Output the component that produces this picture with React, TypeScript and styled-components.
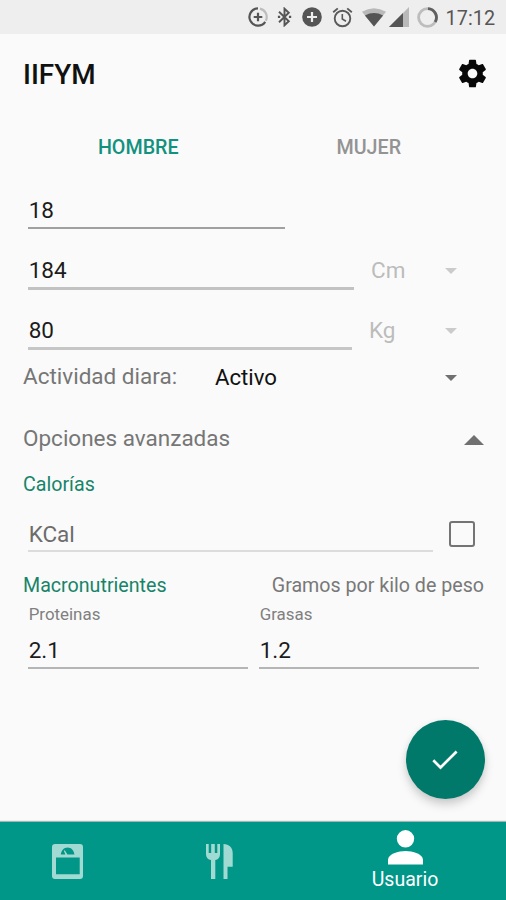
import React from "react";
import styled, { createGlobalStyle } from "styled-components";

const TEAL = "#009688";
const DARK_TEAL = "#00796b";

const GlobalStyle = createGlobalStyle`
  *, *::before, *::after { box-sizing: border-box; }
  body { margin: 0; background: #fafafa; }
`;

const Screen = styled.main`
  width: 506px;
  height: 900px;
  display: flex;
  flex-direction: column;
  overflow: hidden;
  background: #fafafa;
  color: #1c1c1c;
  font-family: Roboto, "Liberation Sans", sans-serif;
  font-size: 22.5px;
`;

const StatusBar = styled.header`
  height: 34px;
  flex: none;
  display: flex;
  align-items: center;
  justify-content: flex-end;
  padding-right: 10.5px;
  background: #eeeeee;
`;

const StatusIcon = styled.svg<{ $w: number; $h: number; $gap: number }>`
  display: block;
  flex: none;
  width: ${(p) => p.$w}px;
  height: ${(p) => p.$h}px;
  margin-right: ${(p) => p.$gap}px;
`;

const Clock = styled.time`
  width: 50px;
  line-height: 34px;
  padding-top: 3px;
  font-size: 19.8px;
  letter-spacing: 0.1px;
  color: #565656;
  white-space: nowrap;
`;

const Toolbar = styled.div`
  height: 80px;
  flex: none;
  display: flex;
  align-items: flex-start;
  justify-content: space-between;
  padding: 0 17px 0 23px;
`;

const Title = styled.h1`
  margin: 0;
  font-size: 27.9px;
  font-weight: 500;
  line-height: 82px;
  color: #111;
`;

const GearButton = styled.button`
  width: 33px;
  height: 33px;
  margin-top: 23px;
  padding: 0;
  border: 0;
  background: none;
  svg { display: block; }
`;

const Tabs = styled.div`
  height: 67px;
  flex: none;
  display: grid;
  grid-template-columns: 1fr 1fr;
  padding: 0 22px 0 23px;
`;

const Tab = styled.button<{ $active?: boolean }>`
  padding: 1px 0 0;
  border: 0;
  background: none;
  font: 500 19.7px/66px Roboto, sans-serif;
  color: ${(p) => (p.$active ? "#12917f" : "#939393")};
`;

const FieldRow = styled.div<{ $height: number }>`
  height: ${(p) => p.$height}px;
  flex: none;
  display: flex;
  padding-left: 28px;
`;

const Field = styled.div<{
  $width: number;
  $lineTop: number;
  $line: string;
  $thick?: number;
  $hint?: boolean;
}>`
  width: ${(p) => p.$width}px;
  height: ${(p) => p.$lineTop + (p.$thick ?? 2)}px;
  flex: none;
  padding-left: 0.7px;
  line-height: ${(p) => (p.$hint ? 75 : 59)}px;
  border-bottom: ${(p) => p.$thick ?? 2}px solid ${(p) => p.$line};
  color: ${(p) => (p.$hint ? "#6c6c6c" : "#1c1c1c")};
`;

const Unit = styled.div<{ $indent: number }>`
  flex: 1;
  display: flex;
  justify-content: space-between;
  height: 59px;
  line-height: 59px;
  padding: 0 49px 0 ${(p) => p.$indent}px;
  color: #bcbcbc;
`;

const Caret = styled.span<{ $color: string; $top: number }>`
  width: 0;
  height: 0;
  margin-top: ${(p) => p.$top}px;
  border: 6.5px solid transparent;
  border-bottom: 0;
  border-top-color: ${(p) => p.$color};
`;

const ActivityRow = styled.div`
  height: 32px;
  flex: none;
  display: flex;
  padding: 0 49px 0 23px;
  line-height: 31px;
`;

const ActivityLabel = styled.span`
  width: 192px;
  color: #767676;
`;

const ActivityValue = styled.span`
  flex: 1;
  padding-top: 1px;
  font-size: 22.2px;
  color: #111;
`;

const AdvancedRow = styled.div`
  height: 59px;
  flex: none;
  display: flex;
  align-items: center;
  justify-content: space-between;
  margin-top: 16px;
  padding: 0 22px 0 23px;
  line-height: 59px;
  color: #767676;
`;

const CollapseArrow = styled.span`
  width: 0;
  height: 0;
  margin-top: 2px;
  border: 10px solid transparent;
  border-top: 0;
  border-bottom-color: #707070;
`;

const SectionRow = styled.div<{ $top?: number }>`
  height: 26px;
  flex: none;
  display: flex;
  justify-content: space-between;
  margin-top: ${(p) => p.$top ?? 0}px;
  padding: 0 22px 0 23px;
  font-size: 19.65px;
  line-height: 28px;
`;

const SectionTitle = styled.span`
  color: #178469;
`;

const SectionNote = styled.span`
  color: #787878;
`;

const CheckBox = styled.span`
  width: 26px;
  height: 26px;
  margin: 24px 0 0 15.5px;
  border: 2.6px solid #747474;
  border-radius: 3px;
`;

const Macros = styled.div`
  display: flex;
  gap: 11px;
  padding-left: 28px;
`;

const Macro = styled.div`
  width: 220px;
  display: flex;
  flex-direction: column;
`;

const MacroLabel = styled.span`
  height: 23px;
  margin-top: 4px;
  padding-left: 0.7px;
  font-size: 16.9px;
  line-height: 25px;
  color: #808080;
`;

const MacroValue = styled.span`
  height: 44px;
  padding-left: 0.7px;
  line-height: 51px;
  border-bottom: 2px solid #b5b5b5;
`;

const FabArea = styled.div`
  flex: 1;
  display: flex;
  align-items: flex-end;
  justify-content: flex-end;
  padding: 0 21.5px 23px 0;
`;

const Fab = styled.button`
  width: 79px;
  height: 79px;
  display: flex;
  align-items: center;
  justify-content: center;
  padding: 0;
  border: 0;
  border-radius: 50%;
  background: ${DARK_TEAL};
  box-shadow: 0 6px 10px rgba(0, 0, 0, 0.17), 0 1px 6px rgba(0, 0, 0, 0.06);
`;

const BottomNav = styled.nav`
  height: 78px;
  flex: none;
  display: grid;
  grid-template-columns: 135px 169px 202px;
  background: ${TEAL};
  box-shadow: 0 -1px 1px rgba(0, 60, 50, 0.35);
`;

const NavItem = styled.a<{ $active?: boolean }>`
  display: flex;
  flex-direction: column;
  align-items: center;
  padding-top: ${(p) => (p.$active ? 8 : 22)}px;
  color: ${(p) => (p.$active ? "#ffffff" : "#a1dad2")};
  svg { display: block; flex: none; }
`;

const NavLabel = styled.span`
  margin-top: 2px;
  font-size: 19.5px;
  line-height: 26px;
`;

function StatusIcons() {
  return (
    <>
      <StatusIcon $w={20} $h={20} $gap={9} viewBox="0 0 20 20" fill="none" strokeWidth="2.2">
        <path d="M10 1.4A8.6 8.6 0 1 0 17.2 14.8" stroke="#555" />
        <path d="M12 1.6A8.6 8.6 0 0 1 17.8 13.8" stroke="#bdbdbd" />
        <path d="M10 5.7v8.6M5.7 10h8.6" stroke="#555" />
      </StatusIcon>
      <StatusIcon $w={15} $h={20} $gap={10} viewBox="0 0 15 20" fill="none" stroke="#555" strokeWidth="1.9">
        <path d="M2 4.8 11.8 14.2 7.5 18.3V1.7L11.8 5.8 2 15.2" />
        <path d="M2 9.9h.1M13 9.9h.1" strokeWidth="2.2" strokeLinecap="square" />
      </StatusIcon>
      <StatusIcon $w={20} $h={20} $gap={10} viewBox="0 0 20 20">
        <circle cx="10" cy="10" r="9.8" fill="#555" />
        <path d="M10 5v10M5 10h10" stroke="#eee" strokeWidth="2.2" />
      </StatusIcon>
      <StatusIcon $w={21} $h={21} $gap={9} viewBox="0 0 21 21" fill="none" stroke="#5a5a5a" strokeWidth="1.9">
        <circle cx="10.5" cy="11.5" r="7.8" />
        <path d="M1.2 5.3 5.8 1.4M19.8 5.3 15.2 1.4" />
        <path d="M10.3 7v5l3.7 2.2" strokeWidth="1.6" />
      </StatusIcon>
      <StatusIcon $w={24} $h={19} $gap={3} viewBox="0 0 24 19">
        <path d="M0 3.8Q12-3.4 24 3.8L12 18.6z" fill="#b9b9b9" />
        <path d="M2.9 7.4Q12 2.7 21.1 7.4L12 18.6z" fill="#555" />
      </StatusIcon>
      <StatusIcon $w={20} $h={20} $gap={8} viewBox="0 0 20 20">
        <path d="M0 20 20 0v20z" fill="#b9b9b9" />
        <path d="M0 20 14 6v14z" fill="#555" />
      </StatusIcon>
      <StatusIcon $w={21} $h={21} $gap={7.7} viewBox="0 0 21 21" fill="none" strokeWidth="2.8">
        <circle cx="10.5" cy="10.5" r="8.9" stroke="#bdbdbd" />
        <path d="M11 1.6A8.9 8.9 0 0 1 18.2 15" stroke="#606060" />
      </StatusIcon>
    </>
  );
}

const Gear = () => (
  <svg width="33" height="33" viewBox="0 0 24 24" fill="#080808">
    <path d="M19.43 12.98c.04-.32.07-.64.07-.98s-.03-.66-.07-.98l2.11-1.65c.19-.15.24-.42.12-.64l-2-3.46c-.12-.22-.39-.3-.61-.22l-2.49 1c-.52-.4-1.08-.73-1.69-.98l-.38-2.65C14.46 2.18 14.25 2 14 2h-4c-.25 0-.46.18-.49.42l-.38 2.65c-.61.25-1.17.59-1.69.98l-2.49-1c-.23-.09-.49 0-.61.22l-2 3.46c-.13.22-.07.49.12.64l2.11 1.65c-.04.32-.07.65-.07.98s.03.66.07.98l-2.11 1.65c-.19.15-.24.42-.12.64l2 3.46c.12.22.39.3.61.22l2.49-1c.52.4 1.08.73 1.69.98l.38 2.65c.03.24.24.42.49.42h4c.25 0 .46-.18.49-.42l.38-2.65c.61-.25 1.17-.59 1.69-.98l2.49 1c.23.09.49 0 .61-.22l2-3.46c.12-.22.07-.49-.12-.64l-2.11-1.65zM12 15.5c-1.93 0-3.5-1.57-3.5-3.5s1.57-3.5 3.5-3.5 3.5 1.57 3.5 3.5-1.57 3.5-3.5 3.5z" />
  </svg>
);

const Check = () => (
  <svg width="26" height="20" viewBox="0 0 26 20" fill="none" stroke="#fff" strokeWidth="2.7">
    <path d="M1.3 10.3 8.5 17.5 24.6 1.5" />
  </svg>
);

const Scale = () => (
  <svg width="31" height="35" viewBox="0 0 31 35" fill="currentColor">
    <path
      fillRule="evenodd"
      d="M3 0h25a3 3 0 0 1 3 3v29a3 3 0 0 1-3 3H3a3 3 0 0 1-3-3V3a3 3 0 0 1 3-3zM4 13.6v16.6h23.7V13.6zM8.8 10.5h4.6L11.8 6.8l1-.5 2.6 4.2h7C22 6.3 19.2 3.500 15.600 3.500S9.300 6.300 8.800 10.500z"
    />
  </svg>
);

const Cutlery = () => (
  <svg width="27" height="35" viewBox="0 0 27 35" fill="currentColor">
    <path d="M0 0h2.700v9h2.500V0h3.600v9h2.500V0H14v10.400c0 3-2 5-4.700 5.600V35H5V16C2 15.400 0 13.400 0 10.400z" />
    <path d="M17.500 0c5.500 0 9.200 3.500 9.200 9v13.700h-5.200V35h-4z" />
  </svg>
);

const Person = () => (
  <svg width="35" height="35" viewBox="0 0 35 35" fill="currentColor">
    <circle cx="17.500" cy="8.800" r="8.700" />
    <path d="M0 34.500v-4.700C0 24.200 10.500 21 17.500 21S35 24.200 35 29.800v4.700z" />
  </svg>
);

export default function App() {
  return (
    <>
      <GlobalStyle />
      <Screen>
        <StatusBar>
          <StatusIcons />
          <Clock>17:12</Clock>
        </StatusBar>
        <Toolbar>
          <Title>IIFYM</Title>
          <GearButton aria-label="Ajustes">
            <Gear />
          </GearButton>
        </Toolbar>
        <Tabs>
          <Tab $active>HOMBRE</Tab>
          <Tab>MUJER</Tab>
        </Tabs>
        <FieldRow $height={60}>
          <Field $width={257} $lineTop={46} $line="#a0a0a0">18</Field>
        </FieldRow>
        <FieldRow $height={60}>
          <Field $width={326} $lineTop={46} $line="#c2c2c2" $thick={3}>184</Field>
          <Unit $indent={17}>
            Cm
            <Caret $color="#cbcbcb" $top={27} />
          </Unit>
        </FieldRow>
        <FieldRow $height={60}>
          <Field $width={324} $lineTop={46} $line="#c6c6c6" $thick={3}>80</Field>
          <Unit $indent={17}>
            Kg
            <Caret $color="#cbcbcb" $top={27} />
          </Unit>
        </FieldRow>
        <ActivityRow>
          <ActivityLabel>Actividad diara:</ActivityLabel>
          <ActivityValue>Activo</ActivityValue>
          <Caret $color="#707070" $top={14} />
        </ActivityRow>
        <AdvancedRow>
          Opciones avanzadas
          <CollapseArrow />
        </AdvancedRow>
        <SectionRow $top={3}>
          <SectionTitle>Calorías</SectionTitle>
        </SectionRow>
        <FieldRow $height={75}>
          <Field $width={405} $lineTop={53} $line="#dcdcdc" $hint>KCal</Field>
          <CheckBox />
        </FieldRow>
        <SectionRow>
          <SectionTitle>Macronutrientes</SectionTitle>
          <SectionNote>Gramos por kilo de peso</SectionNote>
        </SectionRow>
        <Macros>
          <Macro>
            <MacroLabel>Proteinas</MacroLabel>
            <MacroValue>2.1</MacroValue>
          </Macro>
          <Macro>
            <MacroLabel>Grasas</MacroLabel>
            <MacroValue>1.2</MacroValue>
          </Macro>
        </Macros>
        <FabArea>
          <Fab aria-label="Guardar">
            <Check />
          </Fab>
        </FabArea>
        <BottomNav>
          <NavItem>
            <Scale />
          </NavItem>
          <NavItem>
            <Cutlery />
          </NavItem>
          <NavItem $active>
            <Person />
            <NavLabel>Usuario</NavLabel>
          </NavItem>
        </BottomNav>
      </Screen>
    </>
  );
}
